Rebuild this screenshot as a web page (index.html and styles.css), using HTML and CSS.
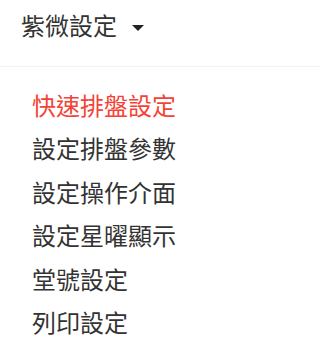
FILE: index.html
```html
<!DOCTYPE html>
<html lang="zh-Hant">
<head>
<meta charset="utf-8">
<link rel="stylesheet" href="styles.css">
</head>
<body>
<div class="header">
  <span class="title">紫微設定</span>
  <span class="caret"></span>
</div>
<ul class="menu">
  <li class="item active">快速排盤設定</li>
  <li class="item">設定排盤參數</li>
  <li class="item">設定操作介面</li>
  <li class="item">設定星曜顯示</li>
  <li class="item">堂號設定</li>
  <li class="item">列印設定</li>
</ul>
</body>
</html>
```
FILE: styles.css
```css
html, body {
  margin: 0;
  padding: 0;
  background: #fff;
}
body {
  font-family: "Noto Sans CJK TC", "Noto Sans", sans-serif;
  color: #333;
  overflow: hidden;
}
.header {
  display: flex;
  align-items: flex-start;
  height: 53px;
  padding: 13px 0 0 21px;
  border-bottom: 1px solid #f3f3f3;
}
.title {
  font-size: 24px;
  line-height: 24px;
}
.caret {
  width: 0;
  height: 0;
  margin: 12px 0 0 15px;
  border-left: 6.5px solid transparent;
  border-right: 6.5px solid transparent;
  border-top: 6.5px solid #222;
}
.menu {
  list-style: none;
  margin: 0;
  padding: 16px 0 0 32px;
}
.item {
  font-size: 24px;
  line-height: 43.4px;
  height: 43.4px;
}
.item.active {
  color: #f44336;
}
```
